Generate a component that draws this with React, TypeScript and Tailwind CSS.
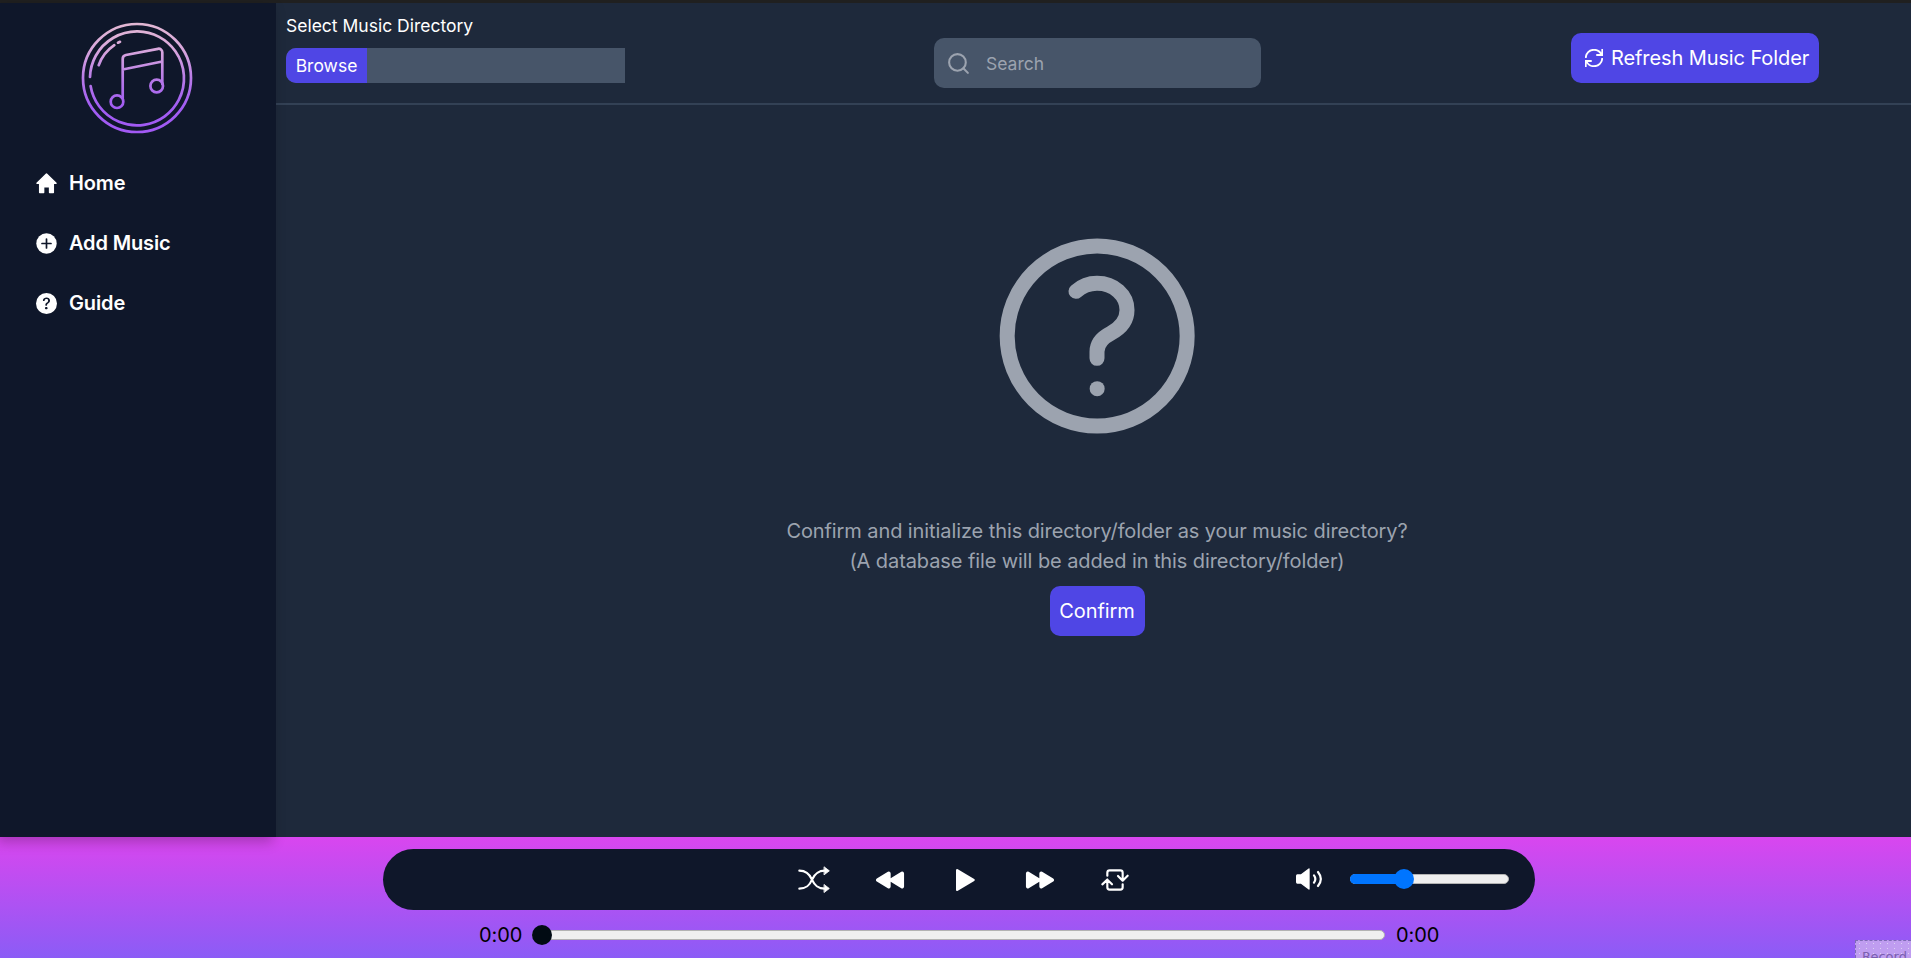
import type { ReactNode } from "react";
import { FiSearch } from "react-icons/fi";
import { BsQuestionCircleFill } from "react-icons/bs";
import { GrUpdate } from "react-icons/gr";
import { IoPlayBack, IoPlayForward } from "react-icons/io5";

function Logo() {
  return (
    <svg width="112" height="112" viewBox="0 0 112 112" fill="none" stroke="url(#logo)" strokeWidth="2.7" strokeLinecap="round" strokeLinejoin="round">
      <defs>
        <linearGradient id="logo" gradientUnits="userSpaceOnUse" x1="0" y1="0" x2="0" y2="112">
          <stop offset="0" stopColor="#e3b9d3" />
          <stop offset="0.25" stopColor="#d8a6dc" />
          <stop offset="0.55" stopColor="#b374ea" />
          <stop offset="0.75" stopColor="#a25df3" />
          <stop offset="1" stopColor="#a259f4" />
        </linearGradient>
      </defs>
      <circle cx="56" cy="56" r="54" />
      <path d="M9 55A47 47 0 1 1 9.600 64" />
      <path d="M17.700 43.200A41 41 0 0 1 33.300 23.200M37 20.700L39 19.800" />
      <path d="M41.700 76V37a4 4 0 0 1 3.200-4L77 26.800a3.600 3.600 0 0 1 4.300 3.500V62M41.700 47.500L81.300 39.500" />
      <circle cx="36" cy="79.700" r="6.300" />
      <circle cx="75.700" cy="64" r="6.300" />
    </svg>
  );
}

function Home() {
  return (
    <svg width="21" height="21" viewBox="0 0 21 21" fill="white" stroke="white" strokeLinejoin="round">
      <path d="M10.500 1L20 10.300H17.300V19.500H13.600V13.700H7.600V19.500H3.700V10.300H1Z" strokeWidth="1.500" />
    </svg>
  );
}

function PlusCircle() {
  return (
    <svg width="21" height="21" viewBox="0 0 21 21">
      <circle cx="10.500" cy="10.500" r="10.200" fill="white" />
      <path d="M6 10.500H15M10.500 6V15" stroke="#0f172a" strokeWidth="1.700" strokeLinecap="round" />
    </svg>
  );
}

function NavItem({ icon, label }: { icon: ReactNode; label: string }) {
  return (
    <a className="flex h-[60px] items-center gap-3 text-[20px] leading-[30px] font-semibold tracking-[-0.14px] text-white">
      <span className="flex w-[21px] justify-center">{icon}</span>
      <span>{label}</span>
    </a>
  );
}

function QuestionMark() {
  return (
    <svg width="196" height="196" viewBox="117 84 588 588" fill="none" stroke="#9ca3af" strokeWidth="45" strokeLinecap="round" strokeLinejoin="round">
      <circle cx="411.500" cy="378" r="270" />
      <path d="M348 244C366 228 388 220 411 220C462 220 501 256 501 300C501 333 482 354 452 370C427 383 411 399 411 425V445" />
      <circle cx="411.500" cy="536" r="22.500" fill="#9ca3af" stroke="none" />
    </svg>
  );
}

function Shuffle() {
  return (
    <svg width="32" height="28" viewBox="82 78 96 84" fill="none" stroke="white" strokeWidth="6.500" strokeLinecap="round">
      <path d="M86 92C108 92 117 103 124 119C132 136 141 146 162 146M86 146C108 146 117 136 124 119C132 103 141 92 162 92" />
      <path d="M161 81L176 92.500L161 104ZM161 134L176 145.500L161 157Z" fill="white" strokeWidth="2.500" strokeLinejoin="round" />
    </svg>
  );
}

function Play() {
  return (
    <svg width="30" height="30" viewBox="0 0 30 30" fill="white" stroke="white" strokeWidth="2.400" strokeLinejoin="round">
      <path d="M7.200 5.200L23.600 15L7.200 24.800Z" />
    </svg>
  );
}

function Repeat() {
  return (
    <svg width="30" height="26" viewBox="990 81 90 78" fill="none" stroke="white" strokeWidth="6.500" strokeLinecap="round" strokeLinejoin="round">
      <path d="M1012 107V98Q1012 91 1019 91H1051Q1058 91 1058 98V121M1044 108L1058 122L1073 107" />
      <path d="M1058 133V142Q1058 149 1051 149H1019Q1012 149 1012 142V119M997 133L1012 119L1026 133" />
    </svg>
  );
}

function Volume() {
  return (
    <svg width="30" height="26" viewBox="102 138 90 78" fill="none" stroke="white" strokeWidth="6.500" strokeLinecap="round" strokeLinejoin="round">
      <path d="M112 165H123L147 147V207L123 189H112Q110 189 110 186V168Q110 165 112 165Z" fill="white" strokeWidth="4" />
      <path d="M162 166Q170 177 162 188M174 156Q191 177 174 198" />
    </svg>
  );
}

export default function App() {
  return (
    <div className="flex h-[958px] w-[1911px] flex-col overflow-hidden bg-[#1e293b] font-['Inter',sans-serif]">
      <div className="h-[3px] shrink-0 bg-[#202020]" />
      <div className="flex h-[834px] shrink-0">
        <aside className="relative z-10 flex w-[276px] flex-col bg-[#0f172a] shadow-[-3px_5px_12px_rgba(0,0,0,0.24)]">
          <div className="flex justify-center pt-[19px] pr-0.5">
            <Logo />
          </div>
          <nav className="flex flex-col pt-[19px] pl-9">
            <NavItem icon={<Home />} label="Home" />
            <NavItem icon={<PlusCircle />} label="Add Music" />
            <NavItem icon={<BsQuestionCircleFill size={21} />} label="Guide" />
          </nav>
        </aside>
        <main className="flex flex-1 flex-col">
          <header className="flex h-[102px] items-start border-b-2 border-[#334155] pl-2.5 text-white">
            <div className="w-[339px] pt-2.5 text-[17.5px] leading-[25px]">
              <label className="block">Select Music Directory</label>
              <div className="mt-2.5 flex h-[35px] rounded-l-[10px] bg-[#475569]">
                <button className="w-[81px] rounded-l-[10px] bg-[#4f46e5]">Browse</button>
              </div>
            </div>
            <div className="mt-[35px] ml-[309px] flex h-[50px] w-[327px] items-center gap-[15px] rounded-[10px] bg-[#475569] pl-3 text-[17.5px] text-[#9ca3af]">
              <FiSearch size={25} />
              <span className="pt-0.5">Search</span>
            </div>
            <button className="mt-[30px] ml-[310px] flex h-[50px] w-[248px] items-center gap-2 rounded-[10px] bg-[#4f46e5] pl-3.5 text-[20px] tracking-[-0.1px] whitespace-nowrap">
              <GrUpdate size={18} className="shrink-0 [&_path]:stroke-white [&_path]:stroke-[2.4px]" />
              Refresh Music Folder
            </button>
          </header>
          <section className="flex flex-col items-center pt-[133px] pl-[7px] text-[20px] leading-[30px] tracking-[-0.09px] text-[#9ca3af]">
            <QuestionMark />
            <p className="mt-[82px] text-center">
              Confirm and initialize this directory/folder as your music directory?
              <br />
              (A database file will be added in this directory/folder)
            </p>
            <button className="mt-2.5 h-[50px] w-[95px] rounded-[10px] bg-[#4f46e5] text-white">Confirm</button>
          </section>
        </main>
      </div>
      <footer className="relative h-[121px] bg-linear-to-b/srgb from-[#d946ef] to-[#8b5cf6] pt-3">
        <div className="ml-[383px] flex h-[61px] w-[1152px] items-center rounded-full bg-[#0f172a] text-white">
          <div className="ml-[415px] flex items-center">
            <Shuffle />
            <div className="ml-[45px] flex items-center gap-[45px]">
              <IoPlayBack size={30} />
              <Play />
              <IoPlayForward size={30} />
              <Repeat />
            </div>
          </div>
          <div className="mb-0.5 ml-[164px] flex items-center">
            <Volume />
            <div className="relative ml-[26px] h-2.5 w-[159px] rounded-full border border-[#b2b2b2] bg-[#efefef]">
              <div className="absolute -top-px -left-px h-2.5 w-[54px] rounded-full bg-[#0075ff]" />
              <div className="absolute -top-[6px] left-[43px] size-5 rounded-full bg-[#0075ff]" />
            </div>
          </div>
        </div>
        <div className="ml-[479px] flex h-[50px] items-center text-[20px] tracking-[-0.1px] text-black">
          <span className="w-[53px]">0:00</span>
          <div className="relative h-2.5 w-[853px] rounded-full border border-[#b2b2b2] bg-[#efefef]">
            <div className="absolute -top-[6px] -left-px size-5 rounded-full bg-[#010b13]" />
          </div>
          <span className="ml-[11px]">0:00</span>
        </div>
        <div className="absolute right-0 bottom-0 h-[18px] w-[56px] overflow-hidden border-t border-l border-dashed border-[#7d6bb5] bg-[#bf9df0] bg-[radial-gradient(#dcd2f4_0.7px,transparent_1px)] bg-[size:7px_5px] pt-[7px] pl-1.5 font-['DejaVu_Sans',sans-serif] text-[13px] leading-[18px] text-[#7a5fae]">
          Record
        </div>
      </footer>
    </div>
  );
}
